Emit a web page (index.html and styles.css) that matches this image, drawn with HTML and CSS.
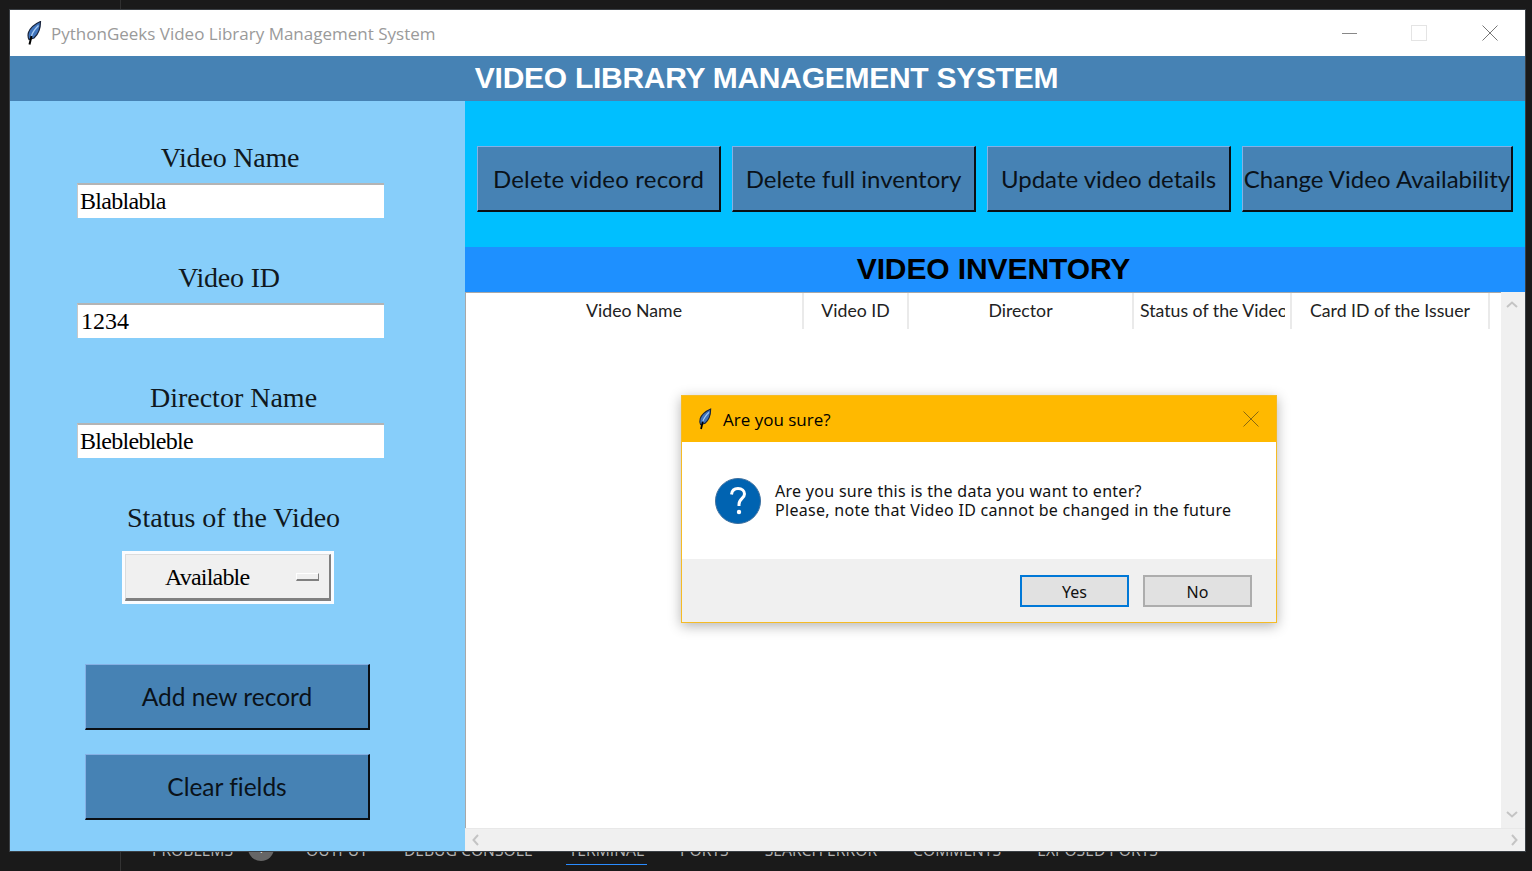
FILE: index.html
```html
<!doctype html>
<html>
<head>
<meta charset="utf-8" />
<title>PythonGeeks Video Library Management System</title>
<link rel="stylesheet" href="styles.css">
</head>
<body>
<svg class="defs" width="0" height="0">
<symbol id="feather" viewBox="0 0 16 24">
<path d="M14.500 .5C10 2.500 4.500 6 2.500 11.500C1.800 14 2 16.500 3 18.500L8 17C12 13.500 14.500 8 14.500 .5Z" fill="#3f74bd" stroke="#18233a" stroke-width="1.200"/>
<path d="M12.500 4.500C9.500 7.500 6.500 11 5.500 15" fill="none" stroke="#a8ccf4" stroke-width="1.300"/>
<path d="M5.500 15L3.500 23.500" fill="none" stroke="#000" stroke-width="2"/>
</symbol>
</svg>
<!-- Das Programmfenster -->
<div class="window">
<div class="titlebar">
<svg class="feather" width="16" height="24"><use href="#feather"/></svg>
<span class="titlebar-text">PythonGeeks Video Library Management System</span>
<div class="wincontrols">
<span class="win-min"></span>
<span class="win-max"></span>
<svg class="win-close" width="16" height="16" viewBox="0 0 16 16"><path d="M.5 .5L15.500 15.500M15.500 .5L.5 15.500" stroke="#777" fill="none"/></svg>
</div>
</div>
<div class="banner">VIDEO LIBRARY MANAGEMENT SYSTEM</div>
<div class="main">
<div class="left">
<div class="field">
<div class="field-label shift-a">Video Name</div>
<input class="field-input" value="Blablabla">
</div>
<div class="field">
<div class="field-label shift-b">Video ID</div>
<input class="field-input num" value="1234">
</div>
<div class="field">
<div class="field-label shift-c">Director Name</div>
<input class="field-input" value="Bleblebleble">
</div>
<div class="field status">
<div class="field-label shift-c">Status of the Video</div>
<div class="optionmenu">
<div class="optionmenu-inner">
<span class="optionmenu-text">Available</span>
<span class="optionmenu-mark"></span>
</div>
</div>
</div>
<button class="tkbtn wide first">Add new record</button>
<button class="tkbtn wide">Clear fields</button>
</div>
<div class="right">
<div class="toolbar">
<button class="tkbtn top first">Delete video record</button>
<button class="tkbtn top">Delete full inventory</button>
<button class="tkbtn top">Update video details</button>
<button class="tkbtn top last">Change Video Availability</button>
</div>
<div class="subbanner">VIDEO INVENTORY</div>
<div class="tablearea">
<div class="tree">
<div class="tree-head">
<div class="col col-name">Video Name</div>
<div class="col col-id">Video ID</div>
<div class="col col-dir">Director</div>
<div class="col col-status"><span class="col-clip">Status of the Video</span></div>
<div class="col col-card">Card ID of the Issuer</div>
</div>
</div>
<div class="vscroll">
<svg width="14" height="10" viewBox="0 0 14 10"><path d="M2 7L7 2.500L12 7" fill="none" stroke="#c4c4c4" stroke-width="2"/></svg>
<svg width="14" height="10" viewBox="0 0 14 10"><path d="M2 3L7 7.500L12 3" fill="none" stroke="#c4c4c4" stroke-width="2"/></svg>
</div>
<div class="hscroll">
<svg width="10" height="14" viewBox="0 0 10 14"><path d="M7 2L2.500 7L7 12" fill="none" stroke="#c4c4c4" stroke-width="2"/></svg>
<svg width="10" height="14" viewBox="0 0 10 14"><path d="M3 2L7.500 7L3 12" fill="none" stroke="#c4c4c4" stroke-width="2"/></svg>
</div>
</div>
</div>
</div>
<!-- Rueckfrage -->
<div class="dialog">
<div class="dialog-title">
<svg class="feather small" width="14" height="22"><use href="#feather"/></svg>
<span>Are you sure?</span>
<svg class="dialog-close" width="16" height="16" viewBox="0 0 16 16"><path d="M.5 .5L15.500 15.500M15.500 .5L.5 15.500" stroke="#8a6a10" fill="none"/></svg>
</div>
<div class="dialog-body">
<svg class="qicon" width="46" height="46" viewBox="0 0 46 46">
<circle cx="23" cy="23" r="22.500" fill="#0063b1" stroke="#3d6f9e" stroke-width="1"/>
<path d="M16.500 16.500C17 12 20 10.500 23 10.500C27 10.500 29.500 13 29.500 16C29.500 20.500 24 20.500 24 26.500V28" fill="none" stroke="#fff" stroke-width="3"/>
<circle cx="24" cy="34" r="2.200" fill="#fff"/>
</svg>
<div class="dialog-msg">Are you sure this is the data you want to enter?<br>Please, note that Video ID cannot be changed in the future</div>
</div>
<div class="dialog-foot">
<button class="dlgbtn active">Yes</button>
<button class="dlgbtn">No</button>
</div>
</div>
</div>
<!-- VS Code Panel dahinter -->
<div class="panel">
<div class="panel-rail"></div>
<div class="panel-tabs">
<span class="ptab has-badge">PROBLEMS<span class="pbadge">1</span></span>
<span class="ptab">OUTPUT</span>
<span class="ptab">DEBUG CONSOLE</span>
<span class="ptab current">TERMINAL</span>
<span class="ptab">PORTS</span>
<span class="ptab">SEARCH ERROR</span>
<span class="ptab">COMMENTS</span>
<span class="ptab">EXPOSED PORTS</span>
</div>
</div>
</body>
</html>
```
FILE: styles.css
```css
html, body { margin: 0; height: 100%; }
body { background: #1a1a1a; overflow: hidden; padding: 10px 0 0 10px; box-sizing: border-box; }
body:before { content: ''; position: absolute; left: 120px; top: 0; width: 1px; height: 10px; background: #303030; }
.defs { display: block; }
.window { position: relative; z-index: 2; width: 1515px; height: 841px; background: #fff; outline: 1px solid #3a3f44; display: flex; flex-direction: column; }
.titlebar { height: 46px; background: #fff; display: flex; align-items: center; padding-left: 16px; flex: none; }
.feather { flex: none; }
.titlebar-text { font: 17px "Open Sans", sans-serif; color: #9a9a9a; margin-left: 9px; }
.wincontrols { margin-left: auto; display: flex; align-items: center; }
.win-min { width: 15px; height: 1px; background: #888; margin-right: 54px; }
.win-max { width: 14px; height: 14px; border: 1px solid #e4e4e4; margin-right: 55px; }
.win-close { margin-right: 27px; }
.banner { height: 45px; flex: none; background: #4682b4; color: #fff; font: bold 30px/43px "Liberation Sans", sans-serif; letter-spacing: -.27px; text-align: center; padding-right: 2px; box-sizing: border-box; }
.main { flex: 1; display: flex; min-height: 0; }
.left { width: 455px; flex: none; background: #87cefa; padding: 41px 0 0 67px; box-sizing: border-box; }
.field { width: 307px; height: 120px; }
.field-label { font: 28px/32px "Liberation Serif", serif; color: #101820; text-align: center; margin-bottom: 9px; }
.shift-a { padding-right: 1px; letter-spacing: -.2px; }
.shift-b { padding-right: 3px; letter-spacing: -.2px; }
.shift-c { padding-left: 6px; }
.field-input { display: block; width: 100%; height: 35px; box-sizing: border-box; border: 0; border-top: 2px solid #b4b4b4; border-left: 1px solid #c8c8c8; background: #fff; padding: 0 1px 0 2px; font: 24px "Liberation Serif", serif; color: #000; letter-spacing: -.7px; }
.field-input.num { padding-left: 3px; letter-spacing: 0; }
.status { height: 162px; }
.status .field-label { margin-bottom: 17px; }
.optionmenu { width: 212px; height: 53px; margin-left: 45px; box-sizing: border-box; border: 3px solid #fafcff; }
.optionmenu-inner { height: 100%; box-sizing: border-box; background: #f0f0f0; border: 1px solid #dcdcdc; border-right: 2px solid #808080; border-bottom: 3px solid #808080; display: flex; align-items: center; }
.optionmenu-text { font: 24px "Liberation Serif", serif; color: #000; margin-left: 39px; letter-spacing: -.8px; padding-top: 2px; }
.optionmenu-mark { width: 23px; height: 8px; box-sizing: border-box; background: #f0f0f0; border: 1px solid #fff; border-right-color: #808080; border-bottom: 2px solid #808080; margin-left: auto; margin-right: 10px; }
.tkbtn { display: block; background: #4682b4; box-sizing: border-box; border: solid; border-width: 1px 2px 2px 1px; border-color: #86b0e4 #0a0f14 #0a0f14 #86b0e4; color: #0a121a; font: 24.500px "Lato", sans-serif; font-variant-ligatures: none; padding: 0; cursor: pointer; white-space: nowrap; }
.tkbtn.wide { width: 285px; height: 66px; margin: 0 0 24px 8px; }
.tkbtn.top { width: 244px; height: 66px; font-size: 24px; }
.tkbtn.top.first { letter-spacing: .2px; }
.tkbtn.top.last { width: 271px; }
.right { flex: 1; display: flex; flex-direction: column; min-width: 0; }
.toolbar { height: 146px; flex: none; background: #00bfff; box-sizing: border-box; padding: 45px 0 0 12px; display: flex; gap: 11px; align-items: flex-start; }
.subbanner { height: 45px; flex: none; background: #1e90ff; color: #000; font: bold 30px/44px "Liberation Sans", sans-serif; letter-spacing: -.1px; text-align: center; padding-right: 3px; box-sizing: border-box; }
.tablearea { flex: 1; min-height: 0; display: grid; grid-template-columns: 1fr 24px; grid-template-rows: 1fr 23px; }
.tree { background: #fff; min-width: 0; overflow: hidden; border-top: 1px solid #a8a8a8; border-left: 1px solid #a8a8a8; }
.tree-head { display: flex; height: 36px; }
.col { box-sizing: border-box; height: 36px; border-right: 2px solid #eaeaea; font: 17.700px/35px "Lato", sans-serif; color: #222; text-align: center; overflow: hidden; white-space: nowrap; flex: none; }
.col-name { width: 338px; }
.col-id { width: 105px; }
.col-dir { width: 225px; }
.col-status { width: 158px; text-align: left; padding-left: 6px; }
.col-clip { display: block; width: 145px; overflow: hidden; }
.col-card { width: 198px; }
.vscroll { background: #f0f0f0; display: flex; flex-direction: column; justify-content: space-between; align-items: center; padding: 8px 2px 9px 0; box-sizing: border-box; }
.hscroll { grid-column: 1 / 3; background: #f0f0f0; border-top: 1px solid #e8e8e8; display: flex; justify-content: space-between; align-items: center; padding: 0 6px; }
.dialog { position: absolute; left: 671px; top: 385px; width: 596px; height: 228px; box-sizing: border-box; border: 1px solid #f5bb25; background: #fff; box-shadow: 0 3px 12px rgba(0,0,0,.3); display: flex; flex-direction: column; }
.dialog-title { height: 46px; flex: none; background: #ffb900; display: flex; align-items: center; padding-left: 16px; font: 17px "Open Sans", sans-serif; color: #000; }
.feather.small { margin-right: 11px; }
.dialog-close { margin-left: auto; margin-right: 17px; }
.dialog-body { height: 117px; flex: none; display: flex; align-items: center; padding-left: 33px; }
.qicon { flex: none; }
.dialog-msg { margin-left: 14px; font: 16px/19px "Noto Sans", sans-serif; letter-spacing: .29px; color: #111; }
.dialog-foot { flex: 1; background: #f0f0f0; display: flex; justify-content: flex-end; gap: 14px; padding: 16px 24px 0 0; }
.dlgbtn { width: 109px; height: 32px; box-sizing: border-box; background: #e1e1e1; border: 2px solid #adadad; font: 16px "Noto Sans", sans-serif; color: #111; padding: 2px 0 0; }
.dlgbtn.active { border-color: #0078d7; }
.panel { display: flex; height: 29px; margin: -9px 0 0 -10px; }
.panel-rail { width: 120px; flex: none; border-right: 1px solid #333; margin-top: 9px; }
.panel-tabs { display: flex; padding-left: 31px; gap: 36px; font: 15.700px/16px "Open Sans", sans-serif; color: #b4b4b4; }
.ptab { display: block; height: 22px; white-space: nowrap; position: relative; }
.ptab.has-badge { padding-right: 37px; }
.ptab.current { border-bottom: 1px solid #2a8cff; padding: 0 3px; margin: 0 -3px; }
.pbadge { position: absolute; left: 96px; top: -7px; width: 26px; height: 26px; border-radius: 50%; background: #666; color: #eee; text-align: center; line-height: 27px; font-size: 13px; }
```
